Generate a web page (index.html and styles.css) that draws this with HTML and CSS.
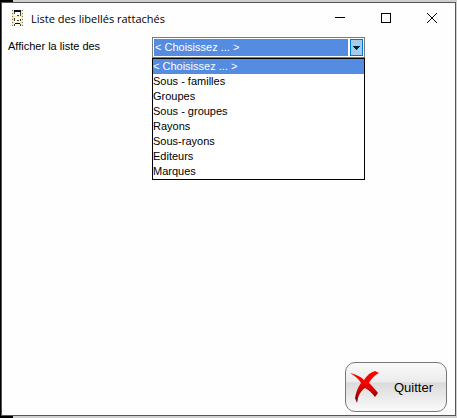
FILE: index.html
```html
<!DOCTYPE html>
<html lang="fr">
<head>
    <meta charset="UTF-8">
    <title>Liste des libellés rattachés</title>
    <link rel="stylesheet" href="styles.css">
</head>
<body>

<div class="window">
    <header class="title-bar">
        <svg class="app-icon" width="11" height="16" viewBox="0 0 11 16" shape-rendering="crispEdges">
            <path d="M0 0h11v16h-11z" fill="#f8ecb0"/>
            <path d="M0 0h1v1h-1zM0 3h1v1h-1zM0 6h1v1h-1zM0 9h1v1h-1zM0 12h1v1h-1zM0 15h1v1h-1zM10 0h1v1h-1zM10 3h1v1h-1zM10 6h1v1h-1zM10 9h1v1h-1zM10 12h1v1h-1zM10 15h1v1h-1z" fill="#777"/>
            <path d="M2 2h7v4h-7zM2 7h7v5h-7zM2 14h7v2h-7z" fill="#fff"/>
            <path d="M2 0h7v2h-7zM3 13h5v1h-5z" fill="#111"/>
            <path d="M2 2h1v2h-1zM8 2h1v4h-1zM5 5h2v1h-2zM2 8h1v3h-1zM8 9h1v2h-1zM5 10h2v1h-2zM2 14h1v2h-1zM8 14h1v2h-1z" fill="#444"/>
        </svg>
        <h1 class="title">Liste des libellés rattachés</h1>
        <div class="window-buttons">
            <button type="button" aria-label="Réduire">
                <svg width="10" height="10" shape-rendering="crispEdges"><path d="M0 4h10v1h-10z"/></svg>
            </button>
            <button type="button" aria-label="Agrandir">
                <svg width="10" height="10" shape-rendering="crispEdges"><path d="M0 0h10v10h-10zM1 1v8h8v-8z" fill-rule="evenodd"/></svg>
            </button>
            <button type="button" aria-label="Fermer">
                <svg width="10" height="10"><path d="M0 0l10 10M10 0l-10 10" stroke="#000"/></svg>
            </button>
        </div>
    </header>

    <main class="content">
        <label class="label" for="liste">Afficher la liste des</label>
        <div class="combo">
            <div class="combo-box">
                <select id="liste" class="combo-select">
                    <option>&lt; Choisissez ... &gt;</option>
                    <option>Sous - familles</option>
                    <option>Groupes</option>
                    <option>Sous - groupes</option>
                    <option>Rayons</option>
                    <option>Sous-rayons</option>
                    <option>Editeurs</option>
                    <option>Marques</option>
                </select>
                <span class="combo-arrow">
                    <svg width="7" height="4" shape-rendering="crispEdges"><path d="M0 0h7v1h-7zM1 1h5v1h-5zM2 2h3v1h-3zM3 3h1v1h-1z" fill="#0b2238"/></svg>
                </span>
            </div>
            <ul class="combo-list" role="listbox">
                <li class="selected" role="option">&lt; Choisissez ... &gt;</li>
                <li role="option">Sous - familles</li>
                <li role="option">Groupes</li>
                <li role="option">Sous - groupes</li>
                <li role="option">Rayons</li>
                <li role="option">Sous-rayons</li>
                <li role="option">Editeurs</li>
                <li role="option">Marques</li>
            </ul>
        </div>
    </main>

    <footer class="footer">
        <button type="button" class="quit">
            <svg class="quit-icon" width="30" height="32" viewBox="0 0 30 32">
                <defs>
                    <linearGradient id="rouge" x1="0" y1="0" x2="0" y2="1">
                        <stop offset="0.35" stop-color="#ff0000"/>
                        <stop offset="1" stop-color="#700000"/>
                    </linearGradient>
                </defs>
                <path d="M0 2C5 3 10 5 14 9C17 4 21 1 25 0L29 2C25 4 21 8 19 12C23 16 26 19 28 22L25 26C22 22 19 19 15 17C12 19 9 23 8 27L7 32L5 27C6 21 8 16 11 12C9 8 5 5 0 2Z" fill="url(#rouge)"/>
            </svg>
            <span>Quitter</span>
        </button>
    </footer>
</div>

</body>
</html>
```

FILE: styles.css
```css
* {
    box-sizing: border-box;
}
body {
    margin: 0;
    height: 100vh;
    padding: 2px 1px;
    background: linear-gradient(to right, #000 13px, #d0d0d0 13px);
    font-family: "Liberation Sans", Arial, sans-serif;
    font-size: 11px;
    color: #000;
}
.window {
    display: flex;
    flex-direction: column;
    height: 100%;
    border: 1px solid #555;
    background: #fefefe;
}
.title-bar {
    display: flex;
    align-items: center;
    height: 30px;
    padding-left: 10px;
}
.app-icon {
    margin-right: 8px;
}
.title {
    margin: 0;
    font-family: "Open Sans", "Segoe UI", sans-serif;
    font-size: 11px;
    font-weight: normal;
}
.window-buttons {
    display: flex;
    margin-left: auto;
    height: 28px;
}
.window-buttons button {
    display: flex;
    align-items: center;
    justify-content: center;
    width: 46px;
    padding: 0;
    border: 0;
    background: none;
}
.content {
    display: flex;
    flex: 1;
    padding: 4px 6px;
}
.label {
    width: 144px;
    line-height: 18px;
}
.combo {
    position: relative;
    width: 213px;
    height: 21px;
}
.combo-box {
    display: flex;
    height: 21px;
    padding: 1px;
    border: 1px solid #7a7a7a;
    background: #fff;
}
.combo-select {
    flex: 1;
    height: 17px;
    padding: 0 0 2px;
    border: 1px dotted #b07a30;
    border-radius: 0;
    outline: 0;
    appearance: none;
    background: #548ce1;
    color: #fff;
    font: inherit;
}
.combo-arrow {
    display: flex;
    align-items: center;
    justify-content: center;
    width: 13px;
    height: 17px;
    margin-left: 2px;
    border: 1px solid #0078d7;
    background: #a3ccee;
    pointer-events: none;
}
/* liste déroulée */
.combo-list {
    position: absolute;
    top: 21px;
    left: 0;
    width: 100%;
    margin: 0;
    padding: 0;
    border: 1px solid #000;
    background: #fff;
    list-style: none;
}
.combo-list li {
    height: 15px;
    line-height: 15px;
}
.combo-list .selected {
    background: #548ce1;
    color: #fff;
}
.footer {
    display: flex;
    justify-content: flex-end;
    padding: 0 8px 3px;
}
.quit {
    display: flex;
    align-items: center;
    width: 102px;
    height: 50px;
    padding: 0 0 0 4px;
    border: 1px solid #777;
    border-radius: 10px;
    background: linear-gradient(#fafafa, #ebebeb 40%, #dadada 41%, #fafafa);
    font-family: "Liberation Sans", Arial, sans-serif;
    font-size: 13px;
}
.quit-icon {
    margin-right: 14px;
}
```
